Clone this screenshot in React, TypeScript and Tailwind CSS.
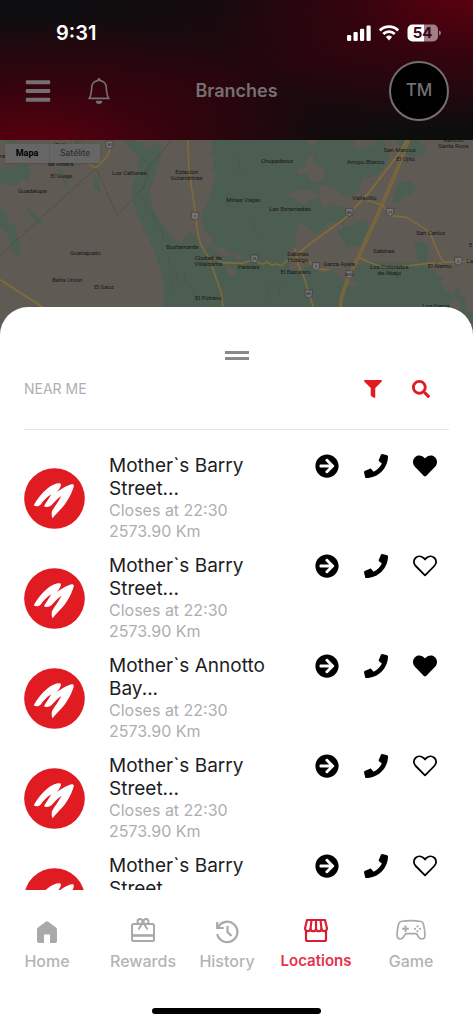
import React from "react";
import { FaArrowCircleRight, FaBars, FaFilter, FaHeart, FaPhone, FaSearch } from "react-icons/fa";
import { BsBell } from "react-icons/bs";

const branches = [
  { name: "Mother`s Barry Street...", favorite: true },
  { name: "Mother`s Barry Street...", favorite: false },
  { name: "Mother`s Annotto Bay...", favorite: true },
  { name: "Mother`s Barry Street...", favorite: false },
  { name: "Mother`s Barry Street...", favorite: false },
];

function StatusBar() {
  return (
    <div className="flex h-[61px] items-center justify-between pr-8 pl-14 pt-1">
      <span className="text-xl font-semibold text-white">9:31</span>
      <div className="flex items-center gap-2">
        <svg className="h-4 w-6" viewBox="0 0 24 16" fill="#fff" aria-label="Signal">
          <rect x="0" y="10" width="4.200" height="6" rx="1.200" />
          <rect x="6.500" y="7" width="4.200" height="9" rx="1.200" />
          <rect x="13" y="3.800" width="4.200" height="12.200" rx="1.200" />
          <rect x="19.500" y="0.500" width="4.200" height="15.500" rx="1.200" />
        </svg>
        <svg className="h-4 w-5" viewBox="0 0 20 16" fill="none" stroke="#fff" strokeWidth="2.800" aria-label="Wi-Fi">
          <path d="M0.900 5.400a13 13 0 0 1 18.200 0" />
          <path d="M4.300 9a8.100 8.100 0 0 1 11.400 0" />
          <path d="M6.900 12a4.500 4.500 0 0 1 6.200 0L10 15.400z" fill="#fff" stroke="none" />
        </svg>
        <svg className="h-[18px] w-[34px]" viewBox="0 0 34 18" aria-label="Battery">
          <path d="M5.500 .5H17V17.500H5.500a5 5 0 0 1-5-5V5.500a5 5 0 0 1 5-5z" fill="#fff" />
          <path d="M17 .5h9a5 5 0 0 1 5 5v7a5 5 0 0 1-5 5h-9z" fill="#a07f87" />
          <path d="M32 6.500q2 .6 2 2.500t-2 2.500z" fill="#a07f87" />
          <text x="15.500" y="14.300" textAnchor="middle" fontSize="15" fontWeight="700" fill="#3a0611" fontFamily="Inter, sans-serif">
            54
          </text>
        </svg>
      </div>
    </div>
  );
}

function Header() {
  return (
    <header className="h-[140px] shrink-0 bg-[radial-gradient(ellipse_62%_100%_at_6%_112%,#60000f_0%,#3c020ecc_50%,transparent_100%),radial-gradient(ellipse_55%_100%_at_100%_-8%,#60000f_0%,#38030ecc_50%,transparent_100%),linear-gradient(165deg,#0e0d0f_10%,#24060d_52%,#0d0d0e_92%)]">
      <StatusBar />
      <div className="grid grid-cols-[1fr_auto_1fr] items-center px-6 text-[#747072]">
        <div className="flex items-center gap-[34px]">
          <button aria-label="Menu">
            <FaBars className="size-7" />
          </button>
          <button aria-label="Notifications">
            <BsBell className="size-[26px]" />
          </button>
        </div>
        <h1 className="text-lg font-semibold">Branches</h1>
        <button className="flex size-[60px] items-center justify-center justify-self-end rounded-full border-2 border-[#747072] bg-black text-[17px] font-medium">
          TM
        </button>
      </div>
    </header>
  );
}

const places: [number, number, string][] = [
  [203, 34, "El Grande"],
  [182, 92, "de Arbera"],
  [184, 127, "El Guaje"],
  [97, 174, "Guadalupe"],
  [388, 119, "Los Cañones"],
  [560, 117, "Estación"],
  [560, 134, "Golandrinas"],
  [256, 358, "Guanajuato"],
  [202, 441, "Bella Unión"],
  [312, 462, "El Sauz"],
  [547, 342, "Bustamante"],
  [625, 375, "Ciudad de"],
  [625, 392, "Villaldama"],
  [625, 493, "El Potrero"],
  [8, 69, "ra"],
  [831, 83, "Chupaderos"],
  [730, 201, "Minas Viejas"],
  [870, 226, "Las Enramadas"],
  [1097, 87, "Arroyo Blanco"],
  [1199, 51, "San Marcos"],
  [1217, 76, "El Ojito"],
  [1360, 20, "Rancho"],
  [1360, 37, "Santa Rosa"],
  [1093, 193, "Vallecillo"],
  [1292, 299, "San Carlos"],
  [894, 363, "Sabinas"],
  [894, 381, "Hidalgo"],
  [1152, 354, "Sabinas"],
  [746, 402, "Paredes"],
  [887, 417, "El Basurero"],
  [1017, 393, "Garza Ayala"],
  [1168, 400, "Los Colorados"],
  [1168, 418, "de Abajo"],
  [1319, 398, "El Álamo"],
  [1409, 383, "La"],
  [1412, 335, "E"],
  [1308, 518, "Los Garza"],
];

const shields: [number, number, string][] = [
  [328, 28, "30"],
  [585, 242, "1"],
  [763, 370, "26"],
  [948, 393, "2"],
  [926, 475, "85"],
  [1048, 230, "85"],
  [1048, 417, "85D"],
  [1170, 230, "21"],
  [1375, 377, "2"],
];

function BranchMap() {
  return (
    <section className="relative h-[196px] shrink-0 bg-[#5f5b54]" aria-label="Map">
      <svg className="h-full w-full" viewBox="0 14 1419 588" preserveAspectRatio="xMidYMin slice">
        <rect width="1419" height="620" fill="#5f5b54" />
        <g fill="#4b5e51">
          <path d="M370 14L380 32 395 45 420 60 412 82 418 105 400 140 395 180 412 240 440 300 465 350 480 400 492 450 492 620H1419V540L1395 520 1398 490 1380 480 1370 440 1350 405 1330 430 1300 405 1260 385 1200 378 1150 385 1110 378 1075 390 1040 395 1068 440 1072 450 1050 455 1030 435 1000 405 960 412 930 390 900 405 870 400 865 345 890 330 885 310 900 260 915 270 950 300 985 262 1030 262 1050 240 1030 215 1000 205 975 220 955 190 960 150 1000 155 1040 188 1075 170 1088 130 1130 122 1150 100 1170 60 1150 14H636L635 55 645 70 635 100 650 125 640 150 625 200 605 235 612 285 640 310 620 345 650 380 625 350 600 330 590 300 570 290 555 300 545 325 520 310 500 285 470 240 455 215 450 160 465 120 482 65 484 30 470 24 440 40 425 20z" />
          <path d="M0 105L25 90 40 100 60 90 85 90 95 110 85 120 88 137 60 132 50 150 30 155 20 140 0 150z" />
          <path d="M0 210L20 235 22 260 45 270 62 340 55 362 40 355 25 300 0 270z" />
          <path d="M80 216L100 232 118 250 132 270 115 265 90 240z" />
          <path d="M282 128l12-2 8 38-10 6-12-20zM172 104l14 0 16 46-10-4z" />
          <path d="M1185 14h70l25 20-12 30-35 2-30-25zM1195 140l30-4 25 14-12 25-30 10-15 22-18-10 10-30z" />
          <path d="M1010 285l20-5-4-18 19 16 30-18 25-5 5 30-20 30 10 20-40-5-15 10-10-22z" />
          <path d="M1245 320l20-4 20 20-5 40-15 18-18-35zM320 516l20-4 20 10v12h-40zM10 14h50l-30 10zM218 14h40l-20 10z" />
        </g>
        <g fill="#5f5b54">
          <path d="M920 14h35l-10 14h-25zM935 52l5 0-3 30 35 20 4 22-18 16-26-4-10-20-28 2-6-18 24-6 8-20z" />
          <path d="M865 175l40-14 40 6 10 22-25 4-10 16-30-6-4-14-22-4z" />
          <path d="M1065 14h80l-35 18-40 8-12-8zM680 390l24 8 6 18-14 8-14-14zM700 350l20 6 10 14-24 2z" />
          <path d="M640 330l30 8 24 14-6 12-30-4zM640 300l-6 30 20 26-18-8z" />
          <path d="M1320 440l25-30 75-25v35l-40 20-20 40-20-12zM1345 500l30-10 10 25-20 20z" />
        </g>
        <g fill="none" stroke="#43564a" strokeWidth="3" opacity=".5">
          <path d="M430 70l16 18-10 20 14 20M415 180l20 20 6 24 18 16 8 30 20 14 4 30 24 18M485 340l20 20 4 24 20 18 4 28 16 20M520 420l-4 36 18 18M550 410l12 36 18 18 4 36" />
          <path d="M700 60l20 18-8 24 18 22M690 170l-12 30 16 26M750 240l16 26-6 22 20 18M790 440l16 18-4 26 18 18M830 430l12 18-4 36" />
        </g>
        <g fill="none" stroke="#4b4843" strokeWidth="2">
          <path d="M0 360L288 98 352 240 432 155 450 90 515 14" />
          <path d="M190 145l55 100M345 250l60 80" opacity=".35" />
        </g>
        <g fill="none" stroke="#7f6a39" strokeLinejoin="round">
          <path strokeWidth="5" d="M330 14q4 35-12 52L288 98l-22-12M563 14l4 90 14 95 14 105q6 30 30 60l20 55 18 50 8 60" />
          <path strokeWidth="6" d="M0 433l130 84 60 40" />
          <path strokeWidth="5" d="M640 368l28 14 60 2 30-10 30 12 14-6 14 10 14-4 14 6 14-14 20-6 50 6 20 24 40 0M885 340l10 50 15 30 16 50 18 60" />
          <path strokeWidth="6" d="M1220 14l-30 50-85 110-70 75-110 80-35 30" />
          <path strokeWidth="10" d="M1226 14l-35 90-65 150-50 110-32 65-20 60-10 90" />
          <path strokeWidth="5" d="M1100 193l50 18 22 30 48 5 40 25 30 20 15 40 25 50 89-4M1075 366l30 14 50 18 80-8 50-6 40 0" />
        </g>
        <path d="M1226 14l-35 90-65 150-50 110-32 65-20 60-10 90" fill="none" stroke="#655a3c" strokeWidth="2" />
        <g fontFamily="Roboto, sans-serif" textAnchor="middle">
          {shields.map(([x, y, label]) => (
            <g key={`${x}-${y}`}>
              <path d={`M${x - 11} ${y - 11}h22v15q0 5-11 9q-11-4-11-9z`} fill="#747474" stroke="#383838" strokeWidth="2" />
              <text x={x} y={y + 5} fontSize="13" fill="#1c1c1c">{label}</text>
            </g>
          ))}
          <g fontSize="18" fill="#242424" stroke="#242424" strokeWidth=".3">
            {places.map(([x, y, label]) => (
              <text key={`${x}-${y}`} x={x} y={y}>{label}</text>
            ))}
          </g>
        </g>
      </svg>
      <div className="absolute top-1 left-[5px] flex h-[19px] bg-[#666] font-[Roboto,sans-serif] text-[9px] shadow">
        <button className="w-11 font-bold text-black">Mapa</button>
        <button className="w-[51px] border-l border-[#5c5c5c] text-[#2a2a2a]">Satélite</button>
      </div>
    </section>
  );
}

function BrandLogo() {
  return (
    <svg className="size-[61px] shrink-0" viewBox="0 0 183 183" role="img" aria-label="Mother's">
      <circle cx="91.500" cy="91.500" r="91" fill="#e11b22" />
      <path
        d="M29 112C40 92 54 74 72 60C84 51 98 45 108 46C113 48 110 56 106 62L98 74C112 62 130 52 143 49C149 48 150 51 149 56C144 74 132 98 116 117C106 129 95 138 86 151C83 146 82 138 84 130C88 120 102 104 112 84C102 90 92 101 83 111C77 117 66 118 60 115C64 105 74 94 82 79C68 87 57 100 49 111C43 116 34 116 29 112Z"
        fill="#fff"
      />
    </svg>
  );
}

function HeartOutline() {
  return (
    <svg className="size-6" viewBox="0 0 24 24" fill="none" stroke="currentColor" strokeWidth="1.800" strokeLinejoin="round">
      <path d="M12 21.400L2.700 12C.3 9.500.3 5.800 2.700 3.700C5.200 1.500 8.700 2 10.800 4.200L12 5.500L13.200 4.200C15.300 2 18.800 1.500 21.300 3.700C23.700 5.800 23.700 9.500 21.300 12Z" />
    </svg>
  );
}

function BranchRow({ name, favorite }: { name: string; favorite: boolean }) {
  return (
    <li className="flex items-center gap-6">
      <BrandLogo />
      <div className="min-w-0 flex-1">
        <h2 className="max-w-[170px] text-[19px] leading-[23px] text-[#1d1d1f]">{name}</h2>
        <p className="text-base leading-[21px] text-[#aeaeb0]">Closes at 22:30</p>
        <p className="text-base leading-[21px] text-[#aeaeb0]">2573.90 Km</p>
      </div>
      <div className="flex gap-[25px] self-start pr-3 text-black">
        <button aria-label="Directions"><FaArrowCircleRight className="size-6" /></button>
        <button aria-label="Call"><FaPhone className="size-6" /></button>
        <button aria-label="Favorite" aria-pressed={favorite}>
          {favorite ? <FaHeart className="size-6" /> : <HeartOutline />}
        </button>
      </div>
    </li>
  );
}

const HomeIcon = () => (
  <svg className="size-7" viewBox="0 0 28 28" fill="#a9a9a9">
    <path d="M13 4.600q1-.8 2 0l8 5.800q1 .8 1 2V24q0 2-2 2h-5v-8.400h-6V26H6q-2 0-2-2V12.400q0-1.200 1-2z" />
  </svg>
);

const RewardsIcon = () => (
  <svg className="size-7" viewBox="0 0 28 28" fill="none" stroke="#a9a9a9" strokeWidth="2" strokeLinejoin="round">
    <rect x="3" y="7" width="22" height="17" rx="1.500" />
    <path d="M3 18.500h22" strokeWidth="2.600" />
    <circle cx="11" cy="4.500" r="2.500" />
    <circle cx="17" cy="4.500" r="2.500" />
    <path d="M13.500 6l-4 6.500M14.500 6l4 6.500" />
  </svg>
);

const HistoryIcon = () => (
  <svg className="size-7" viewBox="0 0 28 28" fill="none" stroke="#a9a9a9" strokeWidth="2.200">
    <path d="M5 10.500A10.200 10.200 0 1 1 4.200 17" />
    <path d="M4.200 5v6h6.500" />
    <path d="M14.500 9v6l4 4" />
  </svg>
);

const StoreIcon = () => (
  <svg className="size-7" viewBox="0 0 28 28" fill="none" stroke="#d81f33" strokeWidth="2.200" strokeLinejoin="round">
    <path d="M5 3h18l2 8.500a2.800 2.800 0 0 1-5.500.5 2.800 2.800 0 0 1-5.500 0 2.800 2.800 0 0 1-5.500 0A2.800 2.800 0 0 1 3 11.500z" />
    <path d="M9.500 3l-1 9M14 3v9M18.500 3l1 9" />
    <path d="M4 14v8.500q0 1.500 1.500 1.500h17q1.500 0 1.500-1.500V14" />
  </svg>
);

const GameIcon = () => (
  <svg className="h-7 w-8" viewBox="0 0 32 28" fill="none" stroke="#a9a9a9" strokeWidth="1.700" strokeLinejoin="round">
    <path d="M6 4.500q10-1.800 20 0 1.800.4 2.400 2.500 1.600 6 1.500 11.500 0 3.500-3.200 3.500-2 0-3.200-2l-1.400-2.400q-.5-.9-1.600-.9h-9q-1.100 0-1.600.9L8.500 20q-1.200 2-3.200 2-3.200 0-3.200-3.500Q2 13 3.600 7q.6-2.100 2.400-2.500z" />
    <path d="M10.500 8.500v6.600M7.200 11.800h6.600" strokeWidth="1.900" />
    <g fill="#a9a9a9" stroke="none">
      <circle cx="22.500" cy="9.300" r="1.100" />
      <circle cx="22.500" cy="14.300" r="1.100" />
      <circle cx="20" cy="11.800" r="1.100" />
      <circle cx="25" cy="11.800" r="1.100" />
    </g>
  </svg>
);

const tabs = [
  { label: "Home", Icon: HomeIcon },
  { label: "Rewards", Icon: RewardsIcon },
  { label: "History", Icon: HistoryIcon },
  { label: "Locations", Icon: StoreIcon, active: true },
  { label: "Game", Icon: GameIcon },
];

export default function App() {
  return (
    <div className="flex h-dvh flex-col overflow-hidden bg-white font-[Inter,'Liberation_Sans',sans-serif]">
      <Header />
      <BranchMap />
      <main className="relative -mt-[29px] flex min-h-0 flex-1 flex-col rounded-t-[28px] bg-white px-6">
        <button className="mt-11 flex w-6 flex-col gap-[3px] self-center" aria-label="Resize panel">
          <span className="h-[3px] w-full bg-[#8a888b]" />
          <span className="h-[3px] w-full bg-[#8a888b]" />
        </button>
        <div className="mt-[15px] flex h-7 items-center justify-between pr-[19px] text-[#e11b22]">
          <span className="text-sm text-[#aeaeb0]">NEAR ME</span>
          <div className="flex gap-[30px]">
            <button aria-label="Filter"><FaFilter className="size-[18px]" /></button>
            <button aria-label="Search"><FaSearch className="size-[18px]" /></button>
          </div>
        </div>
        <hr className="mt-[26px] border-[#e4e4e4]" />
        <ul className="mt-6 flex min-h-0 flex-1 flex-col gap-3 overflow-hidden">
          {branches.map((branch, i) => (
            <BranchRow key={i} {...branch} />
          ))}
        </ul>
      </main>
      <nav className="grid shrink-0 grid-cols-[94fr_98fr_70fr_108fr_82fr] pt-[27px] pr-[21px]">
        {tabs.map(({ label, Icon, active }) => (
          <a
            key={label}
            href="#"
            aria-current={active ? "page" : undefined}
            className={
              active
                ? "flex flex-col items-center gap-1 text-[15px] leading-6 font-semibold text-[#e8304a]"
                : "flex flex-col items-center gap-1 text-base leading-6 font-medium text-[#b4b4b4]"
            }
          >
            <Icon />
            {label}
          </a>
        ))}
      </nav>
      <div className="mt-[35px] mb-[10px] h-[6px] w-[169px] shrink-0 self-center rounded-full bg-black" />
    </div>
  );
}
